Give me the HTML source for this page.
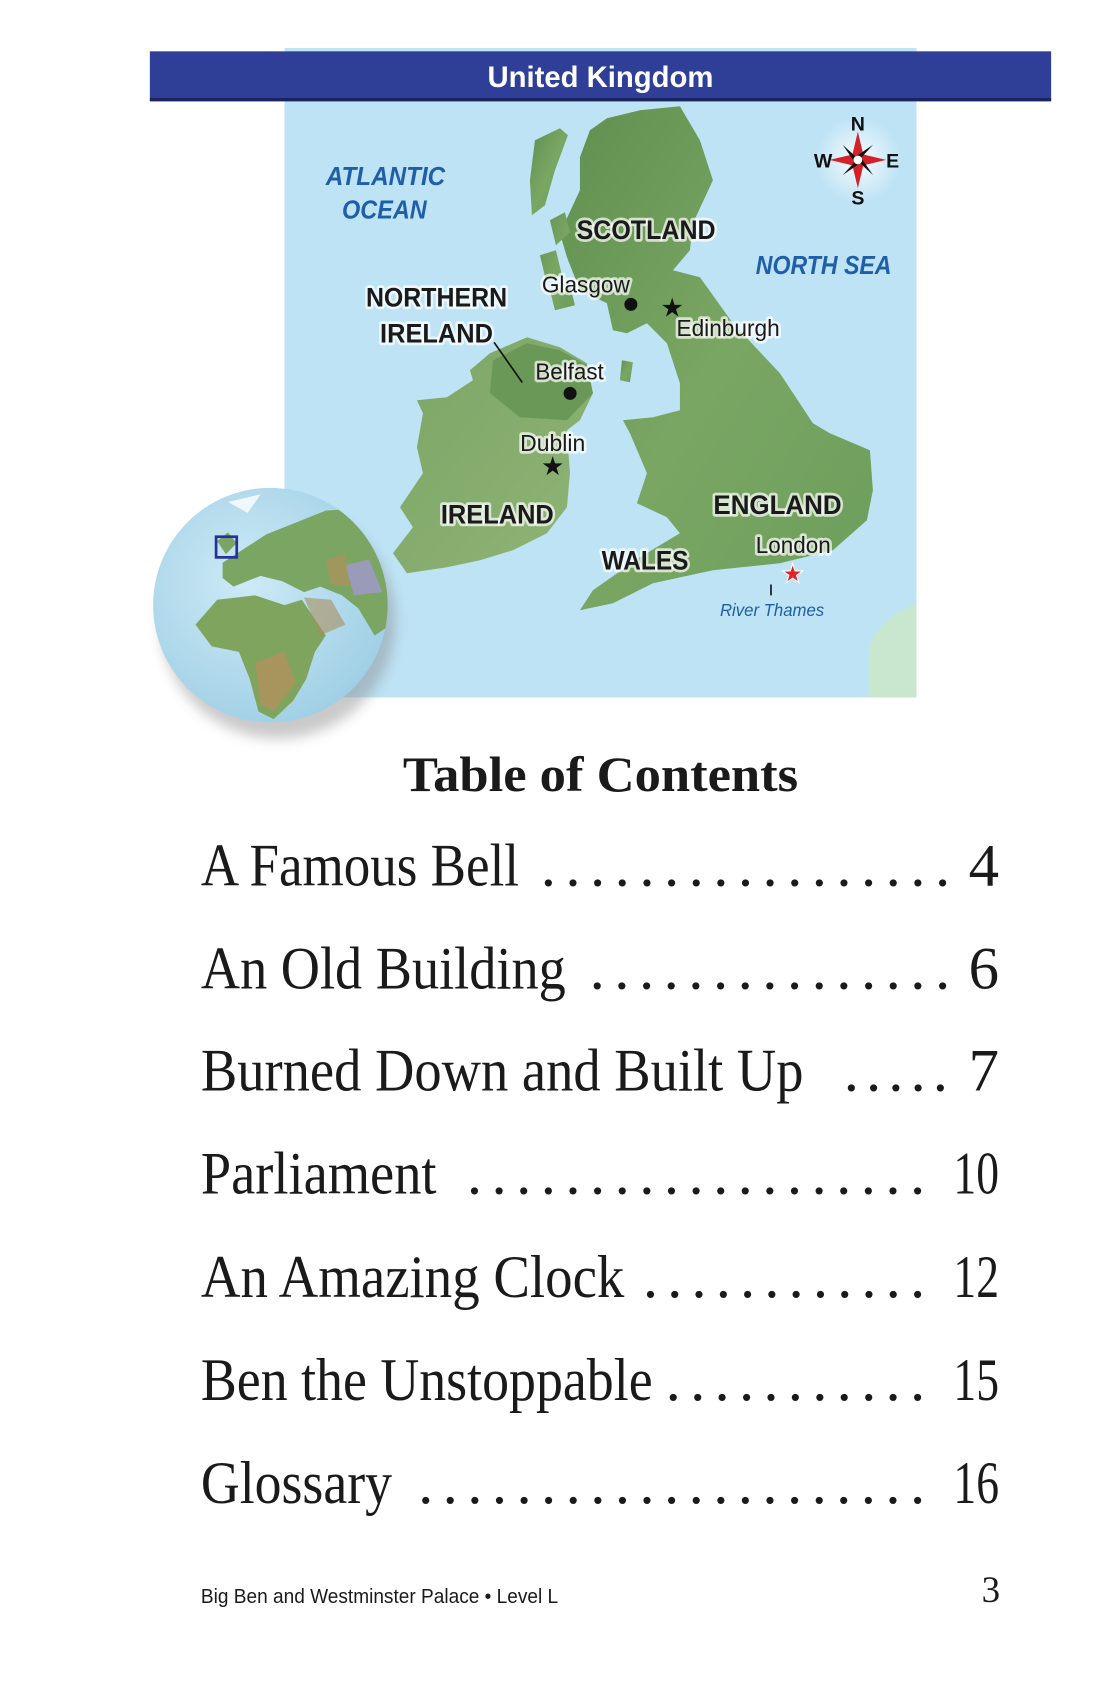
<!DOCTYPE html>
<html><head><meta charset="utf-8"><style>
html,body{margin:0;padding:0;background:#fff;width:1100px;height:1700px;overflow:hidden}
svg{display:block}
.lbl{font-family:"Liberation Sans Narrow","Liberation Sans",sans-serif;paint-order:stroke;stroke:#fff;stroke-opacity:.7;stroke-width:5px;stroke-linejoin:round}
.big{font-weight:bold;font-size:25px;fill:#1a1a1a}
.city{font-size:21px;fill:#1a1a1a}
.sea{font-weight:bold;font-style:italic;font-size:24px;fill:#1f5ea8;stroke:none}
.toc{font-family:"Liberation Serif",serif;font-size:56px;fill:#1a1a1a}
</style></head><body>
<svg width="1100" height="1700" viewBox="0 0 1013 1565" xmlns="http://www.w3.org/2000/svg">
<defs>
<linearGradient id="land" x1="0" y1="0" x2="1" y2="1">
<stop offset="0" stop-color="#5f8f4f"/><stop offset=".5" stop-color="#7aa663"/><stop offset="1" stop-color="#6d9e5c"/>
</linearGradient>
<linearGradient id="iland" x1="0" y1="0" x2="1" y2="1">
<stop offset="0" stop-color="#7ba566"/><stop offset="1" stop-color="#8fb476"/>
</linearGradient>
<radialGradient id="glob" cx=".4" cy=".4" r=".7">
<stop offset="0" stop-color="#cdeaf6"/><stop offset="1" stop-color="#9ccde4"/>
</radialGradient>
<filter id="sh" x="-30%" y="-30%" width="160%" height="160%"><feGaussianBlur stdDeviation="6"/></filter>
<radialGradient id="halo"><stop offset="0" stop-color="#fff" stop-opacity=".9"/><stop offset="1" stop-color="#fff" stop-opacity="0"/></radialGradient>
</defs>
<rect x="262" y="44" width="582" height="598" fill="#bde3f5"/>
<path d="M800 642 L844 642 L844 555 Q810 570 800 595 Z" fill="#c9e6cf"/>
<g transform="scale(0.9208)">
<!-- Great Britain (page coords) -->
<path fill="url(#land)" d="M590 130 L607 118 L640 110 L680 106 L700 140 L713 180 L693 223 L690 250 L673 270 L700 277 L733 323 L780 373 L813 423 L830 433 L870 450 L873 490 L867 520 L833 550 L780 563 L713 570 L653 583 L613 603 L580 610 L593 590 L640 557 L680 533 L667 517 L637 503 L647 473 L630 433 L623 420 L653 417 L680 410 L680 383 L667 343 L647 323 L627 333 L613 330 L607 303 L580 290 L567 257 L560 233 L580 190 L580 157 Z"/>
<path fill="url(#land)" d="M535 140 L560 128 L568 135 L555 170 L545 205 L532 215 L530 180 Z"/>
<path fill="url(#land)" d="M550 220 L565 212 L570 232 L556 245 Z M540 255 L556 250 L562 275 L546 280 Z M550 290 L570 285 L575 305 L555 310 Z"/>
<path fill="url(#land)" d="M622 360 L633 362 L630 382 L620 380 Z"/>
<!-- Ireland -->
<path fill="url(#iland)" d="M490 353 L527 337 L560 347 L587 363 L593 393 L580 420 L567 430 L570 473 L567 507 L547 533 L513 550 L480 560 L447 567 L407 573 L393 553 L413 527 L400 507 L423 473 L417 447 L423 413 L417 400 L447 397 L473 380 L470 370 Z"/>
<path fill="#6a9857" d="M493 360 L527 343 L560 350 L587 365 L593 393 L567 420 L520 417 L490 393 Z"/>
</g>
<!-- Globe -->
<circle cx="256" cy="572" r="108" fill="#888" opacity=".45" filter="url(#sh)"/>
<circle cx="249" cy="557" r="108" fill="url(#glob)"/>
<clipPath id="gc"><circle cx="249" cy="557" r="108"/></clipPath>
<g clip-path="url(#gc)">
<path fill="#7aa563" d="M205 518 L225 505 L245 492 L275 480 L300 470 L330 468 L350 485 L362 520 L360 575 L345 585 L330 560 L315 548 L295 540 L280 545 L260 535 L240 530 L215 540 L205 532 Z"/>
<path fill="#9a9bb8" d="M318 520 L340 515 L352 545 L326 548 Z"/>
<path fill="#b98d5c" d="M300 515 L318 510 L322 540 L305 538 Z" opacity=".6"/>
<path fill="#7fa45e" d="M180 575 L200 552 L235 548 L262 557 L278 552 L300 585 L290 600 L282 625 L270 645 L252 662 L238 655 L230 625 L220 600 L195 595 Z"/>
<path fill="#b98d5c" d="M235 610 L262 600 L272 628 L252 655 L240 648 Z" opacity=".7"/>
<path fill="#a88d5f" d="M280 550 L305 552 L318 575 L295 585 Z" opacity=".6"/>
<path fill="#7aa563" d="M200 498 L210 490 L218 500 L208 510 Z"/>
<path fill="#ffffff" opacity=".8" d="M210 462 L240 455 L228 472 Z"/>
</g>
<rect x="199" y="494" width="19" height="19" fill="none" stroke="#2631a0" stroke-width="2.5"/>
<!-- Banner -->
<rect x="138" y="47" width="830" height="46" fill="#2f3e96"/>
<rect x="138" y="90" width="830" height="3" fill="#1b2360"/>
<text x="553" y="80" text-anchor="middle" font-family="Liberation Sans,sans-serif" font-weight="bold" font-size="27" fill="#fff" textLength="208" lengthAdjust="spacingAndGlyphs">United Kingdom</text>
<!-- Compass -->
<circle cx="790" cy="147" r="40" fill="url(#halo)"/>
<g transform="translate(790,147)">
<path d="M0 -26 L5 -5 L26 0 L5 5 L0 26 L-5 5 L-26 0 L-5 -5 Z" fill="#d42027"/>
<path d="M-14 -14 L-2 -3 L14 -14 L3 -2 L14 14 L2 3 L-14 14 L-3 2 Z" fill="#111"/>
<circle r="4" fill="#fff"/>
</g>
<g font-family="Liberation Sans,sans-serif" font-weight="bold" font-size="18" fill="#111" text-anchor="middle">
<text x="790" y="120">N</text><text x="790" y="188">S</text><text x="758" y="154">W</text><text x="822" y="154">E</text></g>
<!-- Labels -->
<text class="lbl sea" x="300" y="170" textLength="110" lengthAdjust="spacingAndGlyphs">ATLANTIC</text>
<text class="lbl sea" x="315" y="201" textLength="78" lengthAdjust="spacingAndGlyphs">OCEAN</text>
<text class="lbl sea" x="696" y="252" textLength="125" lengthAdjust="spacingAndGlyphs">NORTH SEA</text>
<text class="lbl big" x="531" y="220" textLength="128" lengthAdjust="spacingAndGlyphs">SCOTLAND</text>
<text class="lbl big" x="337" y="282" textLength="130" lengthAdjust="spacingAndGlyphs">NORTHERN</text>
<text class="lbl big" x="350" y="315" textLength="104" lengthAdjust="spacingAndGlyphs">IRELAND</text>
<text class="lbl big" x="406" y="482" textLength="104" lengthAdjust="spacingAndGlyphs">IRELAND</text>
<text class="lbl big" x="657" y="473" textLength="118" lengthAdjust="spacingAndGlyphs">ENGLAND</text>
<text class="lbl big" x="554" y="524" textLength="80" lengthAdjust="spacingAndGlyphs">WALES</text>
<text class="lbl city" x="499" y="269" textLength="81" lengthAdjust="spacingAndGlyphs">Glasgow</text>
<text class="lbl city" x="623" y="309" textLength="95" lengthAdjust="spacingAndGlyphs">Edinburgh</text>
<text class="lbl city" x="493" y="349" textLength="63" lengthAdjust="spacingAndGlyphs">Belfast</text>
<text class="lbl city" x="479" y="415" textLength="60" lengthAdjust="spacingAndGlyphs">Dublin</text>
<text class="lbl city" x="696" y="509" textLength="69" lengthAdjust="spacingAndGlyphs">London</text>
<text x="663" y="567" font-family="Liberation Sans,sans-serif" font-style="italic" font-size="16" fill="#1f5ea8" textLength="96" lengthAdjust="spacingAndGlyphs">River Thames</text>
<line x1="710" y1="538" x2="710" y2="548" stroke="#111" stroke-width="1.5"/>
<line x1="455" y1="315" x2="481" y2="352" stroke="#111" stroke-width="1.5"/>
<circle cx="581" cy="280" r="6" fill="#111"/>
<circle cx="525" cy="362" r="6" fill="#111"/>
<g font-family="DejaVu Sans,sans-serif" font-size="24" text-anchor="middle">
<text x="619" y="291" fill="#111">★</text>
<text x="509" y="437" fill="#111">★</text>
<text x="730" y="536" fill="#e32027" stroke="#fff" stroke-width="1">★</text>
</g>
<!-- TOC -->
<text x="553" y="728" text-anchor="middle" font-family="Liberation Serif,serif" font-weight="bold" font-size="46" fill="#1a1a1a" textLength="364" lengthAdjust="spacingAndGlyphs">Table of Contents</text>
<g class="toc">
<text x="185" y="815" textLength="293" lengthAdjust="spacingAndGlyphs">A Famous Bell</text>
<text x="498" y="815" textLength="377" lengthAdjust="spacing">.................</text>
<text x="920" y="815" text-anchor="end">4</text>
<text x="185" y="910" textLength="336" lengthAdjust="spacingAndGlyphs">An Old Building</text>
<text x="543" y="910" textLength="332" lengthAdjust="spacing">...............</text>
<text x="920" y="910" text-anchor="end">6</text>
<text x="185" y="1004" textLength="555" lengthAdjust="spacingAndGlyphs">Burned Down and Built Up</text>
<text x="777" y="1004" textLength="96" lengthAdjust="spacing">.....</text>
<text x="920" y="1004" text-anchor="end">7</text>
<text x="185" y="1099" textLength="217" lengthAdjust="spacingAndGlyphs">Parliament</text>
<text x="430" y="1099" textLength="422" lengthAdjust="spacing">...................</text>
<text x="920" y="1099" text-anchor="end" textLength="42" lengthAdjust="spacingAndGlyphs">10</text>
<text x="185" y="1194" textLength="390" lengthAdjust="spacingAndGlyphs">An Amazing Clock</text>
<text x="592" y="1194" textLength="260" lengthAdjust="spacing">............</text>
<text x="920" y="1194" text-anchor="end" textLength="42" lengthAdjust="spacingAndGlyphs">12</text>
<text x="185" y="1289" textLength="416" lengthAdjust="spacingAndGlyphs">Ben the Unstoppable</text>
<text x="613" y="1289" textLength="239" lengthAdjust="spacing">...........</text>
<text x="920" y="1289" text-anchor="end" textLength="42" lengthAdjust="spacingAndGlyphs">15</text>
<text x="185" y="1384" textLength="176" lengthAdjust="spacingAndGlyphs">Glossary</text>
<text x="385" y="1384" textLength="467" lengthAdjust="spacing">.....................</text>
<text x="920" y="1384" text-anchor="end" textLength="42" lengthAdjust="spacingAndGlyphs">16</text>
</g>
<text x="185" y="1476" font-family="Liberation Sans,sans-serif" font-size="19" fill="#1a1a1a" textLength="329" lengthAdjust="spacingAndGlyphs">Big Ben and Westminster Palace • Level L</text>
<text x="921" y="1475" text-anchor="end" font-family="Liberation Serif,serif" font-size="34" fill="#1a1a1a">3</text>
</svg>
</body></html>
